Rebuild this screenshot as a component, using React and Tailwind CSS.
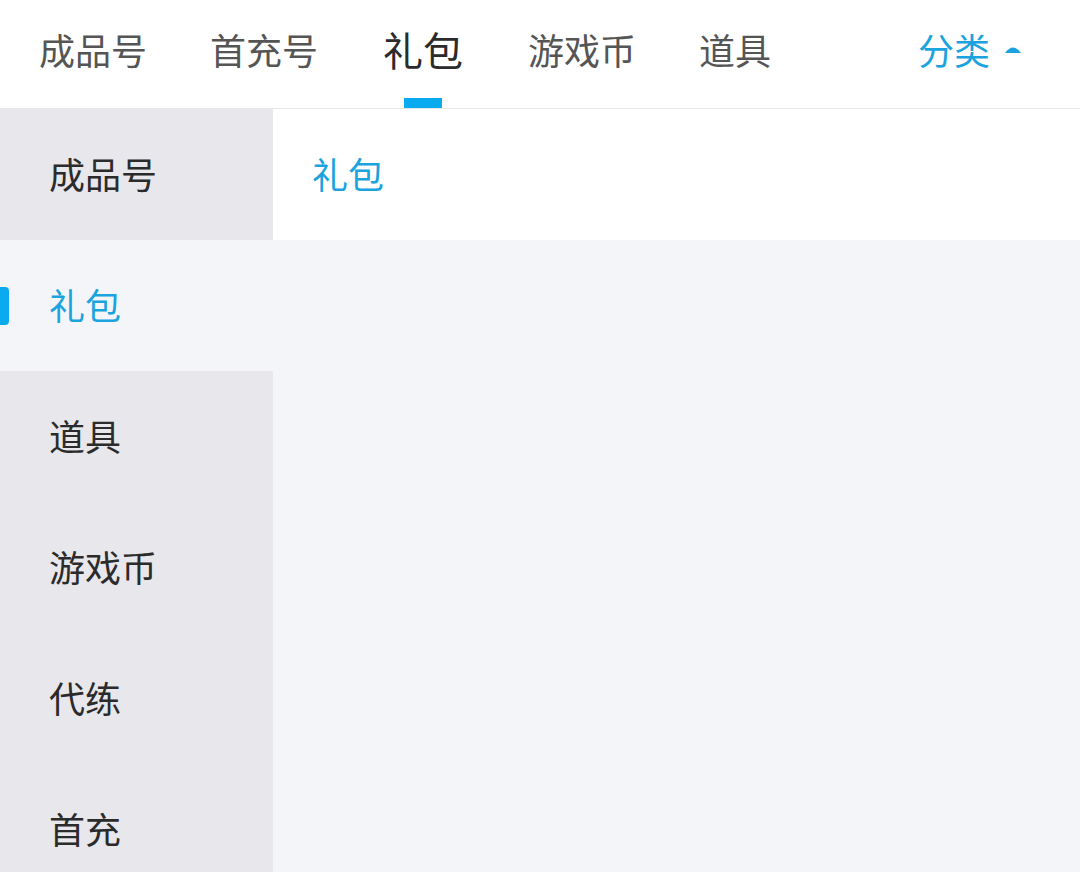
const tabs = ["成品号", "首充号", "礼包", "游戏币", "道具"];
const sideItems = ["成品号", "礼包", "道具", "游戏币", "代练", "首充"];

const font = { fontFamily: '"Noto Sans CJK SC", "Noto Sans", sans-serif' };

export default function App() {
  const activeTab = "礼包";
  const activeSide = "礼包";

  return (
    <div className="w-[1080px] h-[872px] overflow-hidden bg-[#f4f5f9] flex flex-col" style={font}>
      {/* Top tabs */}
      <div className="h-[109px] shrink-0 bg-white border-b border-[#e6e6e6] flex items-stretch pl-[39px] pr-[58px]">
        <div className="flex items-stretch gap-[63px]">
          {tabs.map((t) => (
            <div
              key={t}
              className={"relative flex items-center pb-[10px] " + (t === activeTab ? "px-[2px]" : "")}
            >
              <span
                className={
                  t === activeTab
                    ? "text-[40px] leading-none text-[#2b2b2b]"
                    : "text-[36px] leading-none text-[#555555]"
                }
              >
                {t}
              </span>
              {t === activeTab && (
                <div className="absolute bottom-0 left-1/2 -translate-x-1/2 w-[38px] h-[10px] bg-[#0aaaf0]" />
              )}
            </div>
          ))}
        </div>
        <div className="ml-auto flex items-center gap-[14px] pb-[10px]">
          <span className="text-[36px] leading-none text-[#1ba3de]">分类</span>
          <svg width="18" height="10" viewBox="0 0 18 10">
            <path d="M1 9 Q9 -2 17 9 Z" fill="#1ba3de" />
          </svg>
        </div>
      </div>

      <div className="flex flex-1 min-h-0">
        {/* Sidebar */}
        <div className="w-[273px] shrink-0 bg-[#e7e7ec] flex flex-col">
          {sideItems.map((s) => (
            <div
              key={s}
              className={
                "relative h-[131px] shrink-0 flex items-center pl-[49px] pb-[4px] " +
                (s === activeSide ? "bg-[#f4f5f9]" : "")
              }
            >
              {s === activeSide && (
                <div className="absolute left-0 top-1/2 -translate-y-1/2 w-[9px] h-[38px] rounded-r-[4px] bg-[#0aaaf0]" />
              )}
              <span
                className={
                  "text-[36px] leading-none " +
                  (s === activeSide ? "text-[#1ba3de]" : "text-[#2b2b2b]")
                }
              >
                {s}
              </span>
            </div>
          ))}
        </div>

        {/* Content */}
        <div className="flex-1 flex flex-col">
          <div className="h-[131px] bg-white flex items-center pl-[39px] pb-[4px]">
            <span className="text-[36px] leading-none text-[#1ba3de]">礼包</span>
          </div>
          <div className="flex-1 bg-[#f4f5f9]" />
        </div>
      </div>
    </div>
  );
}
